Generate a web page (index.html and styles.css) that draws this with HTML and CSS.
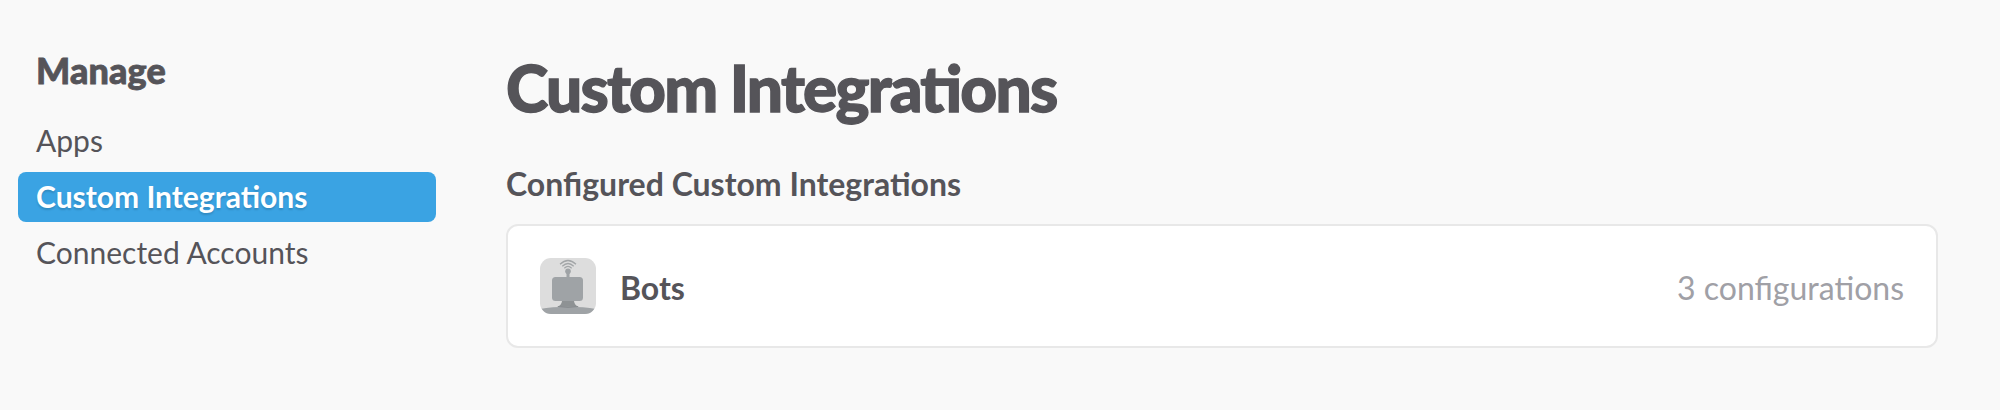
FILE: index.html
```html
<!DOCTYPE html>
<html lang="en"><head><meta charset="utf-8"><title>Custom Integrations</title><link rel="stylesheet" href="styles.css"></head>
<body>
<nav class="sidebar"><h2 class="side-title">Manage</h2>
<a class="item">Apps</a><a class="item active">Custom Integrations</a><a class="item">Connected Accounts</a></nav>
<main class="main"><h1 class="title">Custom Integrations</h1><h3 class="subtitle">Configured Custom Integrations</h3>
<section class="card">
<svg class="icon" viewBox="0 0 56 56">
<defs><clipPath id="tile"><rect width="56" height="56" rx="11"/></clipPath></defs>
<g clip-path="url(#tile)">
<rect width="56" height="56" fill="#ddd"/>
<path d="M22 43H34Q34.5 47.5 39 49H17Q21.500 47.500 22 43Z" fill="#8e9294"/>
<path d="M0 51Q12 48.700 28 48.700T56 51V56H0Z" fill="#9fa3a6"/>
<path d="M18 48.500Q28 50.500 38 48.500" fill="none" stroke="#898d90"/>
<rect x="12" y="19" width="31" height="24" rx="3.500" fill="#9fa3a6"/>
<path d="M26.500 14h3v5h-3z" fill="#9fa3a6"/><circle cx="28" cy="13.200" r="2.800" fill="#9fa3a6"/>
<path d="M20 6.300Q28 -1.300 36 6.300M22.300 8.300Q28 2.700 33.700 8.300M24.300 10.200Q28 6.700 31.700 10.200" fill="none" stroke="#a3a6a8" stroke-width="1.200"/>
</g></svg>
<span class="name">Bots</span><span class="count">3 configurations</span></section></main>
</body></html>
```
FILE: styles.css
```css
*{box-sizing:border-box}
body{margin:0;height:410px;display:flex;background:#f9f9f9;color:#555459;font-family:Lato,sans-serif;overflow:hidden}
.sidebar{width:418px;margin:46px 70px 0 18px;flex:none}
.side-title{margin:0 0 22px;padding-left:18px;font-size:36px;line-height:48px;font-weight:900;letter-spacing:.1px;-webkit-text-stroke:.8px #555459}
.item{display:block;height:50px;margin-bottom:6px;padding-left:18px;border-radius:8px;font-size:30px;line-height:49px}
.active{background:#3aa3e3;color:#fff;font-weight:700;text-shadow:0 2px 2px rgba(0,0,0,.15)}
.main{width:1432px;padding-top:48px}
.title{margin:0;font-size:64px;line-height:80px;font-weight:900;letter-spacing:-1.8px;font-feature-settings:"liga" 1;-webkit-text-stroke:1.3px #555459}
.subtitle{margin:34px 0 18px;font-size:32px;line-height:44px;font-weight:700}
.card{display:flex;align-items:center;height:124px;padding:0 32px;border:2px solid #e8e8e8;border-radius:12px;background:#fff;font-size:32px}
.icon{width:56px;height:56px;margin-right:24px}
.name{padding-top:3px;font-weight:700}
.count{margin-left:auto;padding-top:3px;color:#a0a0a6}
```
